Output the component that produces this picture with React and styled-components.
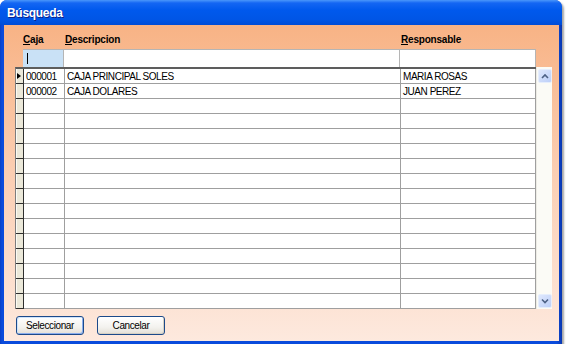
import React from "react";
import styled, { createGlobalStyle } from "styled-components";

const GlobalStyle = createGlobalStyle`
  html, body {
    margin: 0;
    padding: 0;
    background: #fff;
  }
  body {
    font-family: "Liberation Sans", Arial, sans-serif;
    font-size: 10px;
    letter-spacing: -0.45px;
    color: #000;
  }
`;

const Window = styled.div`
  width: 562px;
  height: 344px;
  display: flex;
  flex-direction: column;
  background: linear-gradient(to right, #0a3fc4, #0a4bdc 2px, #0a4bdc 99%, #0a38b0);
  border-radius: 7px 7px 0 0;
  box-shadow: 2px 2px 2px rgba(0, 0, 0, 0.35);
  overflow: hidden;
`;

const TitleBar = styled.div`
  flex: none;
  height: 25px;
  display: flex;
  align-items: center;
  padding-left: 7px;
  background: linear-gradient(
    to bottom,
    #4a97fb 0%,
    #1466f3 12%,
    #0059ed 40%,
    #0055e5 80%,
    #004cd6 100%
  );
  color: #fff;
  font: bold 12px "Liberation Sans", Arial, sans-serif;
  letter-spacing: -0.3px;
  text-shadow: 1px 1px 0 #0c2188;
`;

const Client = styled.div`
  flex: 1;
  margin: 0 3px 3px 4px;
  padding: 7px 0 0 11px;
  display: flex;
  flex-direction: column;
  background: linear-gradient(to bottom, #f8b385 0%, #fbcdb1 45%, #fde9de 100%);
`;

const HeaderRow = styled.div`
  display: grid;
  grid-template-columns: 42px 336px 136px;
  height: 17px;
  margin-left: 8px;
  font-weight: bold;
  letter-spacing: -0.2px;
  line-height: 15px;
`;

const FilterRow = styled.div`
  display: grid;
  grid-template-columns: 41px 336px 136px;
  width: 513px;
  height: 18px;
  margin-left: 8px;
  box-sizing: border-box;
  border-top: 1px solid #b5b5b5;
  background: #fff;
`;

const FilterCell = styled.div`
  display: flex;
  align-items: center;
  border-right: 1px solid #b5b5b5;
  background: ${(p) => (p.$active ? "#c9e1f6" : "#fff")};
`;

const Caret = styled.span`
  width: 1px;
  height: 11px;
  margin-left: 4px;
  background: #000;
`;

const GridArea = styled.div`
  display: flex;
  height: 242px;
`;

const Grid = styled.div`
  width: 521px;
  box-sizing: border-box;
  border-top: 2px solid #5d5d5d;
  border-left: 1px solid #7d7d7d;
`;

const Row = styled.div`
  display: grid;
  grid-template-columns: 8px 41px 336px 135px;
  height: 15px;
`;

const Indicator = styled.div`
  display: flex;
  align-items: center;
  background: #ebe8d9;
  box-shadow: inset 1px 0 0 #fbfaf4;
  border-right: 1px solid #2f2f2f;
  border-bottom: 1px solid #2f2f2f;
  box-sizing: border-box;
`;

const Arrow = styled.span`
  width: 0;
  height: 0;
  margin-left: 1px;
  border-top: 3.5px solid transparent;
  border-bottom: 3.5px solid transparent;
  border-left: 4px solid #000;
`;

const Cell = styled.div`
  box-sizing: border-box;
  padding-left: 2px;
  border-right: 1px solid #9f9f9f;
  border-bottom: 1px solid #9f9f9f;
  background: #fff;
  line-height: 15px;
  white-space: nowrap;
  overflow: hidden;
`;

const ScrollTrack = styled.div`
  width: 16px;
  box-sizing: border-box;
  padding: 2px 1px 1px 1px;
  display: flex;
  flex-direction: column;
  justify-content: space-between;
  background: #fbfbf6;
  border-left: 1px solid #ecebe4;
`;

const ScrollButton = styled.div`
  width: 14px;
  height: 14px;
  box-sizing: border-box;
  display: flex;
  align-items: center;
  justify-content: center;
  border: 1px solid #e6eefc;
  border-radius: 2px;
  background: linear-gradient(to bottom right, #dfe8fd, #bccff8);
`;

const ButtonBar = styled.div`
  display: flex;
  gap: 13px;
  margin: 7px 0 0 1px;
`;

const Button = styled.button`
  width: 68px;
  height: 19px;
  padding: 0;
  font: 10px "Liberation Sans", Arial, sans-serif;
  letter-spacing: -0.4px;
  color: #000;
  border: 1px solid #1c4a8a;
  border-radius: 3px;
  background: linear-gradient(to bottom, #ffffff 0%, #f3f2ee 60%, #e3dfd6 100%);
  box-shadow: ${(p) =>
    p.$default
      ? "inset 1px 1px 0 #cee3fc, inset -1px -1px 0 #89adec"
      : "inset -1px -1px 0 #d6d0c3"};
`;

const Chevron = ({ up }) => (
  <svg width="8" height="6" viewBox="0 0 8 6">
    <polyline
      points={up ? "1,5 4,2 7,5" : "1,1.5 4,4.5 7,1.5"}
      fill="none"
      stroke="#4d6185"
      strokeWidth="1.6"
    />
  </svg>
);

const rows = [
  ["000001", "CAJA PRINCIPAL SOLES", "MARIA ROSAS"],
  ["000002", "CAJA DOLARES", "JUAN PEREZ"],
];
while (rows.length < 16) rows.push(["", "", ""]);

const App = () => {
  return (
    <>
      <GlobalStyle />
      <Window>
        <TitleBar>Búsqueda</TitleBar>
        <Client>
          <HeaderRow>
            <span><u>C</u>aja</span>
            <span><u>D</u>escripcion</span>
            <span><u>R</u>esponsable</span>
          </HeaderRow>
          <FilterRow>
            <FilterCell $active>
              <Caret />
            </FilterCell>
            <FilterCell />
            <FilterCell />
          </FilterRow>
          <GridArea>
            <Grid>
              {rows.map((r, i) => (
                <Row key={i}>
                  <Indicator>{i === 0 && <Arrow />}</Indicator>
                  <Cell>{r[0]}</Cell>
                  <Cell>{r[1]}</Cell>
                  <Cell>{r[2]}</Cell>
                </Row>
              ))}
            </Grid>
            <ScrollTrack>
              <ScrollButton>
                <Chevron up />
              </ScrollButton>
              <ScrollButton>
                <Chevron />
              </ScrollButton>
            </ScrollTrack>
          </GridArea>
          <ButtonBar>
            <Button $default>Seleccionar</Button>
            <Button>Cancelar</Button>
          </ButtonBar>
        </Client>
      </Window>
    </>
  );
};

export default App;
